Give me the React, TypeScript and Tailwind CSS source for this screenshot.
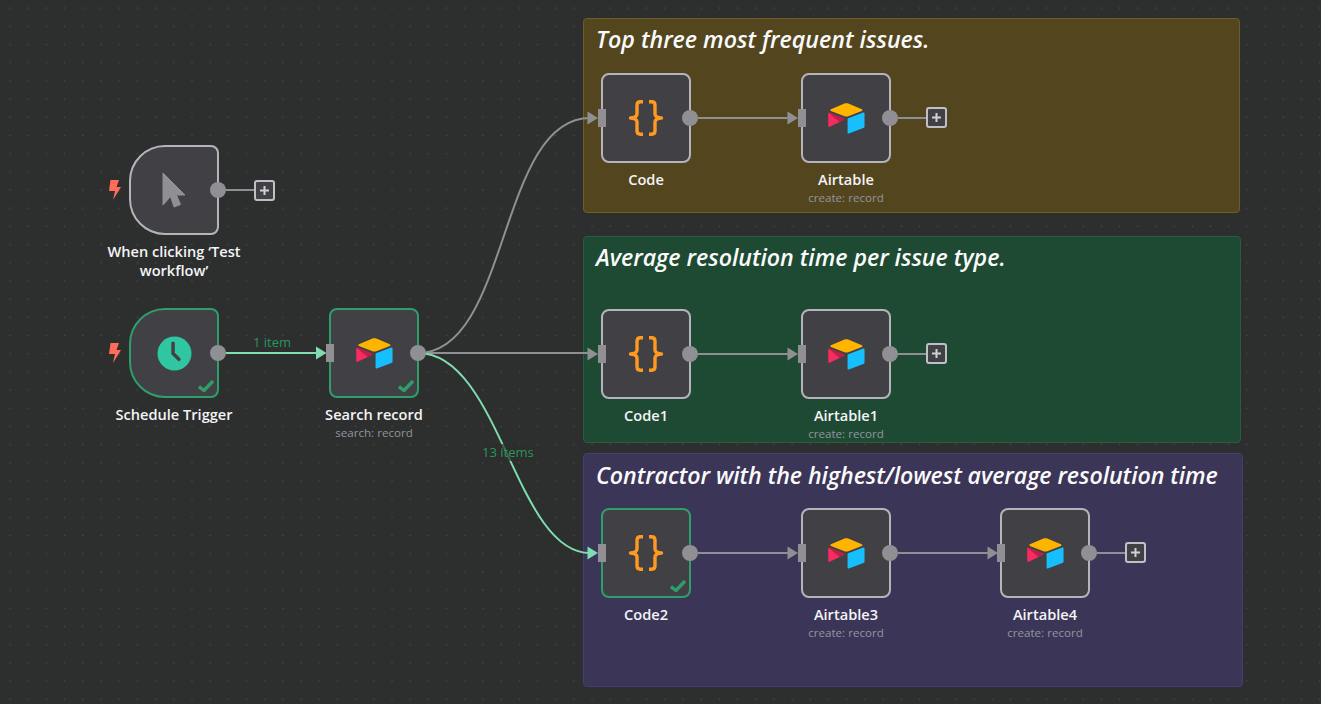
import React from 'react';

const AirtableLogo = () => (
  <svg viewBox="0 0 200 170" className="w-[41px] h-[35px]">
    <path fill="#FFB400" d="M90.04 12.37 24.08 39.66c-3.67 1.52-3.63 6.73.06 8.19l66.24 26.27c5.82 2.3 12.3 2.3 18.12 0l66.23-26.27c3.69-1.46 3.73-6.67.06-8.19l-65.96-27.29c-6.02-2.49-12.78-2.49-18.79 0" />
    <path fill="#18BFFF" d="M105.31 88.46v65.62c0 3.12 3.15 5.25 6.05 4.1l73.81-28.64c1.68-.67 2.79-2.3 2.79-4.11V59.81c0-3.12-3.15-5.25-6.05-4.1l-73.81 28.64c-1.68.67-2.79 2.3-2.79 4.11" />
    <path fill="#F82B60" d="m88.08 91.85-21.9 10.57-2.23 1.08-46.24 22.15c-2.93 1.42-6.67-.72-6.67-3.98V60.09c0-1.18.6-2.2 1.41-2.96.34-.34.72-.62 1.12-.84 1.1-.66 2.68-.84 4.02-.31l70.12 27.78c3.56 1.41 3.84 6.41.37 8.09" />
    <path fill="#000000" fillOpacity="0.25" d="m88.08 91.85-21.9 10.57-53.72-45.29c.34-.34.72-.62 1.12-.84 1.1-.66 2.68-.84 4.02-.31l70.12 27.78c3.56 1.41 3.84 6.41.37 8.09" />
  </svg>
);

const CodeIcon = () => (
  <svg viewBox="0 0 36 36" fill="none" stroke="#FF9922" strokeWidth="3.4" strokeLinejoin="round" className="w-[36px] h-[36px]">
    <path d="M15 1.800h-2.600Q9 1.800 9 5.300V14q0 3.500-6.500 4Q9 18.500 9 22v8.700q0 3.500 3.400 3.500H15" />
    <path d="M21 1.800h2.600Q27 1.800 27 5.300V14q0 3.500 6.500 4Q27 18.500 27 22v8.700q0 3.500-3.400 3.500H21" />
  </svg>
);

const ClockIcon = () => (
  <svg viewBox="0 0 36 36" className="w-[35px] h-[35px]">
    <circle cx="18" cy="18" r="17.500" fill="#2FC6A1" />
    <path d="M16.500 7.500V18l6 6" fill="none" stroke="#414145" strokeWidth="3.600" strokeLinejoin="round" strokeLinecap="round" />
  </svg>
);

const CursorIcon = () => (
  <svg viewBox="0 0 24 36" className="w-[24px] h-[36px]">
    <path fill="#8F8F94" strokeLinejoin="round" stroke="#8F8F94" strokeWidth="1" d="M1 1v32l7.500-8.500L12 35l6.500-2.500L14.500 23H23z" />
  </svg>
);

const Bolt = () => (
  <svg viewBox="0 0 12 20" className="w-[12px] h-[20px]">
    <path fill="#FF6D5A" d="M1.500 0H10L7.500 7H12L4 20l2-9H0z" />
  </svg>
);

const SuccessCheck = () => (
  <svg viewBox="0 0 16 12" fill="none" className="absolute right-[3px] bottom-[4px] w-[16px] h-[12px]">
    <path d="M1 6.500 6 10.500 15 1" stroke="#2F9E6A" strokeWidth="3.400" />
  </svg>
);

const PlusButton = ({ className }: { className: string }) => (
  <div className={`absolute z-20 flex items-center justify-center w-[21px] h-[21px] rounded-[3px] border-2 border-[#bfc0c7] bg-[#414145] ${className}`}>
    <svg viewBox="0 0 11 11" className="w-[11px] h-[11px]">
      <path d="M5.500 1v9M1 5.500h9" stroke="#d0d1d6" strokeWidth="2" />
    </svg>
  </div>
);

interface NodeProps {
  pos: string;
  title: React.ReactNode;
  subtitle?: string;
  icon: React.ReactNode;
  success?: boolean;
  trigger?: boolean;
}

const FlowNode = ({ pos, title, subtitle, icon, success, trigger }: NodeProps) => (
  <div className={`absolute z-10 w-[180px] flex flex-col items-center ${pos}`}>
    <div
      className={`relative w-[90px] h-[90px] flex items-center justify-center border-2 bg-[#414145] ${
        trigger ? 'rounded-l-[36px] rounded-r-[8px]' : 'rounded-[8px]'
      } ${success ? 'border-[#2F9E6A]' : 'border-[#b4b5bc]'}`}
    >
      {icon}
      {success && <SuccessCheck />}
      {!trigger && <div className="absolute -left-[5px] top-[34px] w-[8px] h-[18px] bg-[#8F8F94]" />}
      <div className="absolute -right-[9px] top-[35px] w-[16px] h-[16px] rounded-full bg-[#8F8F94]" />
    </div>
    <div className="mt-[7px] w-[146px] text-center text-[14.6px] leading-[19px] font-semibold text-[#f4f4f6]">{title}</div>
    {subtitle && <div className="mt-[1px] text-[11.6px] leading-[15px] text-[#92959d]">{subtitle}</div>}
  </div>
);

const Sticky = ({ pos, title }: { pos: string; title: string }) => (
  <div className={`absolute rounded-[4px] border px-[12px] ${pos}`}>
    <h2 className="text-[23.2px] leading-[34px] italic font-semibold text-[#fafafa]">{title}</h2>
  </div>
);

const GRAY = '#8F8F94';
const GREEN = '#7FDDB0';

const Arrow = ({ x, y, color }: { x: number; y: number; color: string }) => (
  <path d={`M${x} ${y - 6.5}L${x + 10.5} ${y}L${x} ${y + 6.5}z`} fill={color} />
);

const Edges = () => (
  <svg className="absolute inset-0 z-0 w-[1321px] h-[704px]" fill="none" strokeWidth="2">
    <g stroke={GRAY}>
      <path d="M226 190H254" />
      <path d="M698 118H790" />
      <path d="M898 118H926" />
      <path d="M698 354H790" />
      <path d="M898 354H926" />
      <path d="M698 553H790" />
      <path d="M898 553H990" />
      <path d="M1097 553H1126" />
      <path d="M418 353H590" />
      <path d="M418 353C510 353 498 118 590 118" />
    </g>
    <g stroke={GREEN}>
      <path d="M226 353H320" />
      <path d="M418 353C500 353 515 553 590 553" />
    </g>
    <Arrow x={316} y={353} color={GREEN} />
    <Arrow x={587.5} y={118} color={GRAY} />
    <Arrow x={787.500} y={118} color={GRAY} />
    <Arrow x={587.5} y={354} color={GRAY} />
    <Arrow x={787.500} y={354} color={GRAY} />
    <Arrow x={587.5} y={553} color={GREEN} />
    <Arrow x={787.500} y={553} color={GRAY} />
    <Arrow x={987.500} y={553} color={GRAY} />
  </svg>
);

export default function App() {
  return (
    <div
      className="relative w-[1321px] h-[704px] overflow-hidden bg-[#2d2e2e] bg-[radial-gradient(circle,#4a4b4d_0.8px,transparent_1px)] bg-[size:18.2px_18.2px] bg-[position:1px_-1px]"
      style={{ fontFamily: '"Open Sans", "Noto Sans", sans-serif' }}
    >
      <Sticky pos="left-[583px] top-[18px] w-[657px] h-[195px] pt-[3px] bg-[#53461F] border-[#6E5E26]" title="Top three most frequent issues." />
      <Sticky pos="left-[583px] top-[236px] w-[658px] h-[207px] pt-[3px] bg-[#1E4A33] border-[#2A5C42] tracking-[-0.03px]" title="Average resolution time per issue type." />
      <Sticky pos="left-[583px] top-[453px] w-[660px] h-[234px] pt-[4px] bg-[#3B3558] border-[#433D78] tracking-[-0.07px]" title="Contractor with the highest/lowest average resolution time" />

      <Edges />

      <div className="absolute z-10 left-[253px] top-[334px] text-[13px] leading-[17px] text-[#27975A]">1 item</div>
      <div className="absolute z-10 left-[482px] top-[444px] text-[13px] leading-[17px] text-[#27975A] bg-[#2d2e2e]/70">13 items</div>

      <div className="absolute z-10 left-[109px] top-[180px]"><Bolt /></div>
      <div className="absolute z-10 left-[109px] top-[343px]"><Bolt /></div>

      <FlowNode pos="left-[84px] top-[145px]" trigger icon={<CursorIcon />} title="When clicking ‘Test workflow’" />
      <FlowNode pos="left-[84px] top-[308px]" trigger success icon={<ClockIcon />} title="Schedule Trigger" />
      <FlowNode pos="left-[284px] top-[308px]" success icon={<AirtableLogo />} title="Search record" subtitle="search: record" />

      <FlowNode pos="left-[556px] top-[73px]" icon={<CodeIcon />} title="Code" />
      <FlowNode pos="left-[756px] top-[73px]" icon={<AirtableLogo />} title="Airtable" subtitle="create: record" />

      <FlowNode pos="left-[556px] top-[309px]" icon={<CodeIcon />} title="Code1" />
      <FlowNode pos="left-[756px] top-[309px]" icon={<AirtableLogo />} title="Airtable1" subtitle="create: record" />

      <FlowNode pos="left-[556px] top-[508px]" success icon={<CodeIcon />} title="Code2" />
      <FlowNode pos="left-[756px] top-[508px]" icon={<AirtableLogo />} title="Airtable3" subtitle="create: record" />
      <FlowNode pos="left-[955px] top-[508px]" icon={<AirtableLogo />} title="Airtable4" subtitle="create: record" />

      <PlusButton className="left-[254px] top-[180px]" />
      <PlusButton className="left-[926px] top-[107px]" />
      <PlusButton className="left-[926px] top-[343px]" />
      <PlusButton className="left-[1125px] top-[542px]" />
    </div>
  );
}
